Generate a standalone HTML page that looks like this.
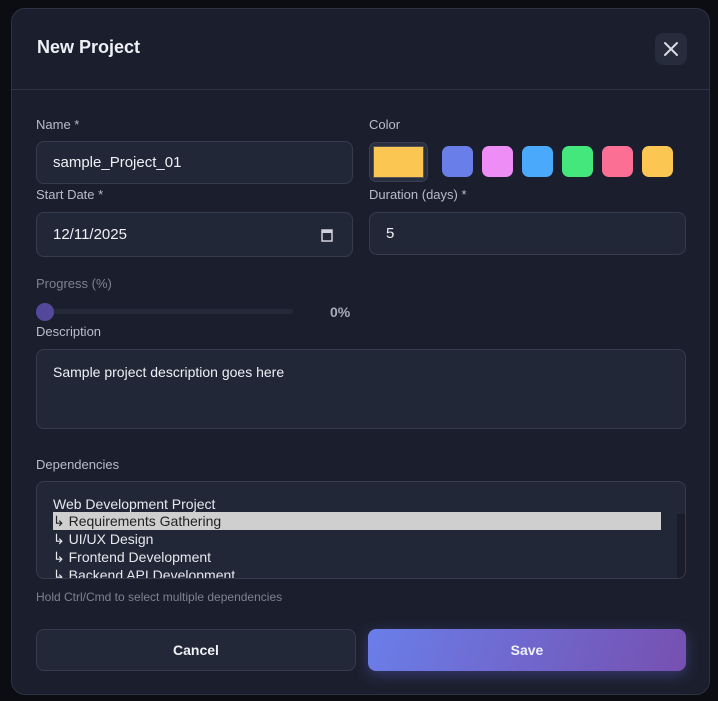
<!DOCTYPE html>
<html><head><style>
*{box-sizing:border-box;margin:0;padding:0}
body{width:718px;height:701px;background:#0c0d13;font-family:"Liberation Sans",sans-serif;position:relative;overflow:hidden}
.m{position:absolute;left:11px;top:8px;width:699px;height:687px;background:#1b1f2d;border:1px solid #2e3344;border-radius:14px}
.a{position:absolute}
.t{left:25px;top:28px;font-size:18px;font-weight:bold;color:#eef0f5}
.x{left:643px;top:24px;width:32px;height:32px;border-radius:8px;background:#272c3c}
.hr{left:0;top:80px;width:697px;height:1px;background:#2f3446}
.l{font-size:13px;color:#b9bdc9}
.in{background:#222737;border:1px solid #363b4d;border-radius:8px;color:#eef0f5;font-size:15px;padding-left:16px;display:flex;align-items:center}
.sw{width:31px;height:31px;border-radius:7px}
.btn{border-radius:8px;display:flex;align-items:center;justify-content:center;font-size:14px;font-weight:bold;color:#f0f1f5}
.o{position:absolute;left:16px;font-size:14px;color:#e6e8ee;line-height:18px}
</style></head><body>
<div class="m">
<div class="a t">New Project</div>
<div class="a x"><svg width="32" height="32"><path d="M10 10L22 22M22 10L10 22" stroke="#d8dbe3" stroke-width="2" stroke-linecap="round"/></svg></div>
<div class="a hr"></div>
<div class="a l" style="left:24px;top:108px">Name *</div>
<div class="a l" style="left:357px;top:108px">Color</div>
<div class="a in" style="left:24px;top:132px;width:317px;height:43px">sample_Project_01</div>
<div class="a" style="left:357px;top:133px;width:59px;height:40px;border:1px solid #3a3f52;border-radius:7px;background:#2a2f40;padding:3px"><div style="width:100%;height:100%;background:#fcc653;border:1px solid #555"></div></div>
<div class="a sw" style="left:430px;top:137px;background:#6a7ee9"></div>
<div class="a sw" style="left:470px;top:137px;background:#ee8df5"></div>
<div class="a sw" style="left:510px;top:137px;background:#4ba9fb"></div>
<div class="a sw" style="left:550px;top:137px;background:#43e77b"></div>
<div class="a sw" style="left:590px;top:137px;background:#fb6f95"></div>
<div class="a sw" style="left:630px;top:137px;background:#fcc653"></div>
<div class="a l" style="left:24px;top:178px">Start Date *</div>
<div class="a l" style="left:357px;top:178px">Duration (days) *</div>
<div class="a in" style="left:24px;top:203px;width:317px;height:45px">12/11/2025<svg class="a" style="left:284px;top:15px" width="12" height="14"><rect x="1" y="2" width="10" height="11" fill="none" stroke="#cfd2da" stroke-width="1.5"/><rect x="1" y="2" width="10" height="3" fill="#cfd2da"/></svg></div>
<div class="a in" style="left:357px;top:203px;width:317px;height:43px">5</div>
<div class="a l" style="left:24px;top:267px;color:#7d8292">Progress (%)</div>
<div class="a" style="left:24px;top:300px;width:257px;height:5px;border-radius:3px;background:#242839"></div>
<div class="a" style="left:24px;top:294px;width:18px;height:18px;border-radius:50%;background:#54489a"></div>
<div class="a" style="left:318px;top:295px;font-size:14px;font-weight:bold;color:#a8acb8">0%</div>
<div class="a l" style="left:24px;top:315px">Description</div>
<div class="a in" style="left:24px;top:340px;width:650px;height:80px;align-items:flex-start;padding-top:14px;font-size:14px">Sample project description goes here</div>
<div class="a l" style="left:24px;top:448px">Dependencies</div>
<div class="a" style="left:24px;top:472px;width:650px;height:98px;background:#222737;border:1px solid #363b4d;border-radius:8px;overflow:hidden">
<div class="o" style="top:13px">Web Development Project</div>
<div class="a" style="left:16px;top:30px;width:608px;height:18px;background:#cfcfcf"></div>
<div class="o" style="top:30px;color:#222">↳ Requirements Gathering</div>
<div class="o" style="top:48px">↳ UI/UX Design</div>
<div class="o" style="top:66px">↳ Frontend Development</div>
<div class="o" style="top:84px">↳ Backend API Development</div>
<div class="a" style="left:640px;top:32px;width:8px;height:66px;background:#1a1d29"></div>
</div>
<div class="a" style="left:24px;top:581px;font-size:12px;color:#7d8292">Hold Ctrl/Cmd to select multiple dependencies</div>
<div class="a btn" style="left:24px;top:620px;width:320px;height:42px;background:#232838;border:1px solid #363b4d">Cancel</div>
<div class="a btn" style="left:356px;top:620px;width:318px;height:42px;background:linear-gradient(110deg,#6a7ee9,#7650b0);box-shadow:0 4px 14px rgba(106,110,233,.35)">Save</div>
</div>
</body></html>
